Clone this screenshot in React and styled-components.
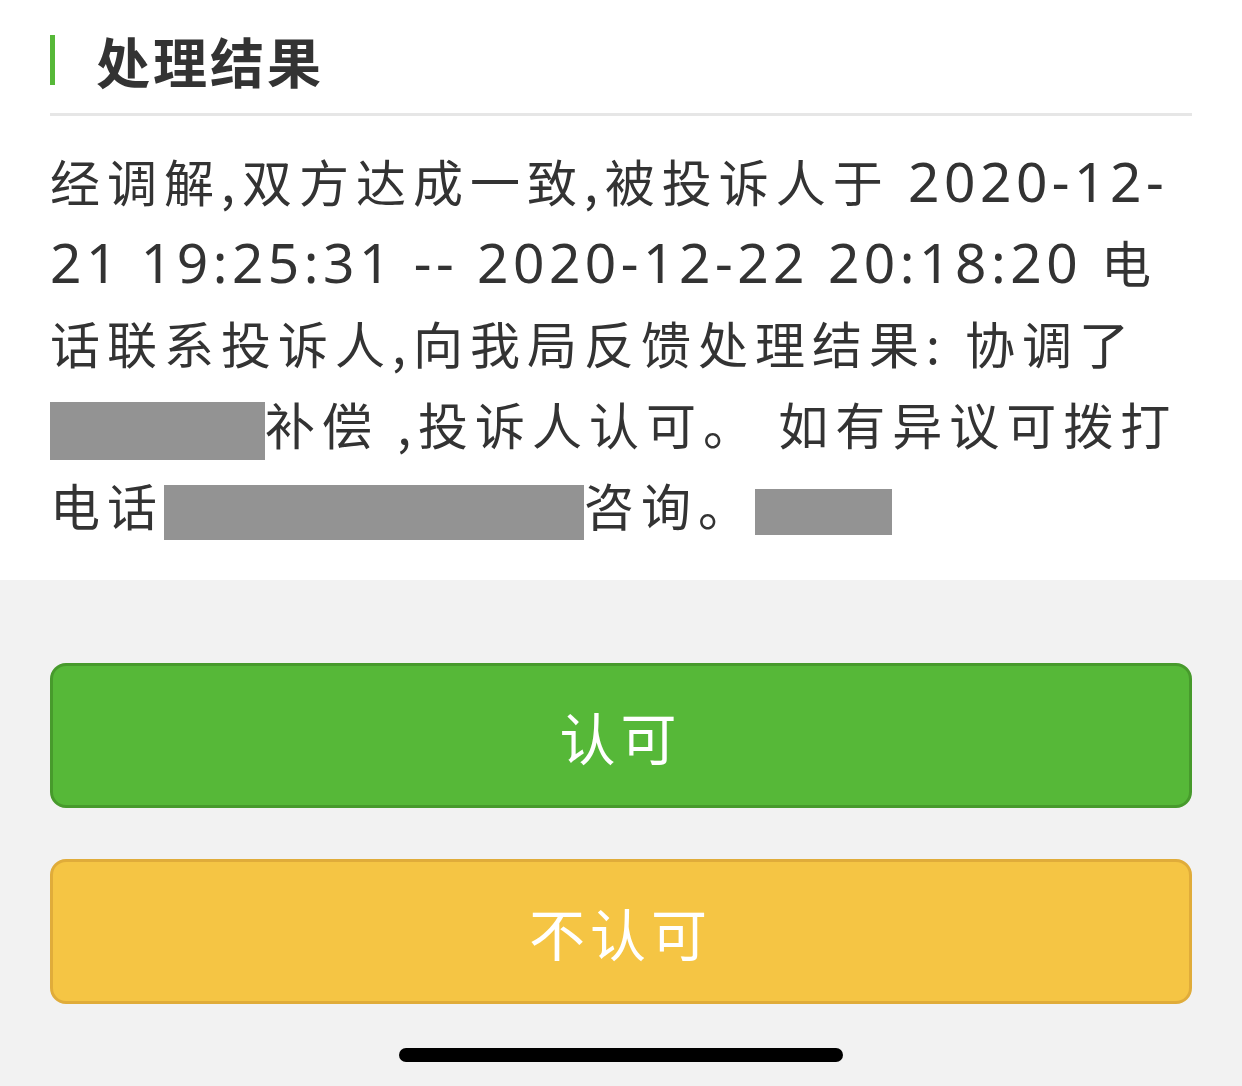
import React from 'react';
import styled, { createGlobalStyle } from 'styled-components';

const GlobalStyle = createGlobalStyle`
  html, body {
    margin: 0;
    padding: 0;
    background: #f2f2f2;
    font-family: "Noto Sans CJK SC", "Noto Sans", sans-serif;
  }
`;

const Page = styled.div`
  width: 1242px;
  height: 1086px;
  display: flex;
  flex-direction: column;
  background: #f2f2f2;
  overflow: hidden;
`;

const Card = styled.section`
  background: #fff;
  padding: 0 50px 35px;
`;

const Header = styled.div`
  display: flex;
  align-items: center;
  height: 116px;
  border-bottom: 3px solid #e6e6e6;
  box-sizing: border-box;
  padding-top: 7px;
`;

const Mark = styled.div`
  width: 5px;
  height: 50px;
  background: #56b838;
  margin-right: 41px;
`;

const Title = styled.h2`
  margin: 0;
  font-size: 54px;
  font-weight: 600;
  color: #333;
  letter-spacing: 3px;
`;

const Body = styled.p`
  margin: 24px 0 0;
  font-size: 50px;
  line-height: 81px;
  letter-spacing: 7px;
  color: #333;
  white-space: nowrap;
`;

const Num = styled.span`
  font-family: "Noto Sans", "Liberation Sans", sans-serif;
  font-size: 55px;
  line-height: 1;
  letter-spacing: 4.5px;
`;

const Redact = styled.span`
  display: inline-block;
  width: ${p => p.w}px;
  height: ${p => p.h}px;
  background: #939393;
  vertical-align: middle;
`;

const Actions = styled.div`
  display: flex;
  flex-direction: column;
  gap: 51px;
  padding: 83px 50px 0;
`;

const Button = styled.button`
  height: 145px;
  border-radius: 16px;
  border: 3px solid ${p => p.edge};
  background: ${p => p.fill};
  color: #fff;
  font-family: "Noto Sans CJK SC", sans-serif;
  font-size: 56px;
  letter-spacing: 5px;
  padding-left: 5px;
  cursor: pointer;
`;

const HomeBar = styled.div`
  align-self: center;
  width: 444px;
  height: 14px;
  border-radius: 7px;
  background: #000;
  margin-top: 44px;
`;

export default function App() {
  return (
    <Page>
      <GlobalStyle />
      <Card>
        <Header>
          <Mark />
          <Title>处理结果</Title>
        </Header>
        <Body>
          经调解,双方达成一致,被投诉人于 <Num>2020-12-</Num><br />
          <Num>21 19:25:31 -- 2020-12-22 20:18:20 </Num>电<br />
          话联系投诉人,向我局反馈处理结果: 协调了<br />
          <Redact w={215} h={58} />补偿 ,投诉人认可。 如有异议可拨打<br />
          电话<Redact w={420} h={55} />咨询。<Redact w={137} h={46} />
        </Body>
      </Card>
      <Actions>
        <Button fill="#56b838" edge="#479a2c">认可</Button>
        <Button fill="#f5c544" edge="#e0ac3a">不认可</Button>
      </Actions>
      <HomeBar />
    </Page>
  );
}
